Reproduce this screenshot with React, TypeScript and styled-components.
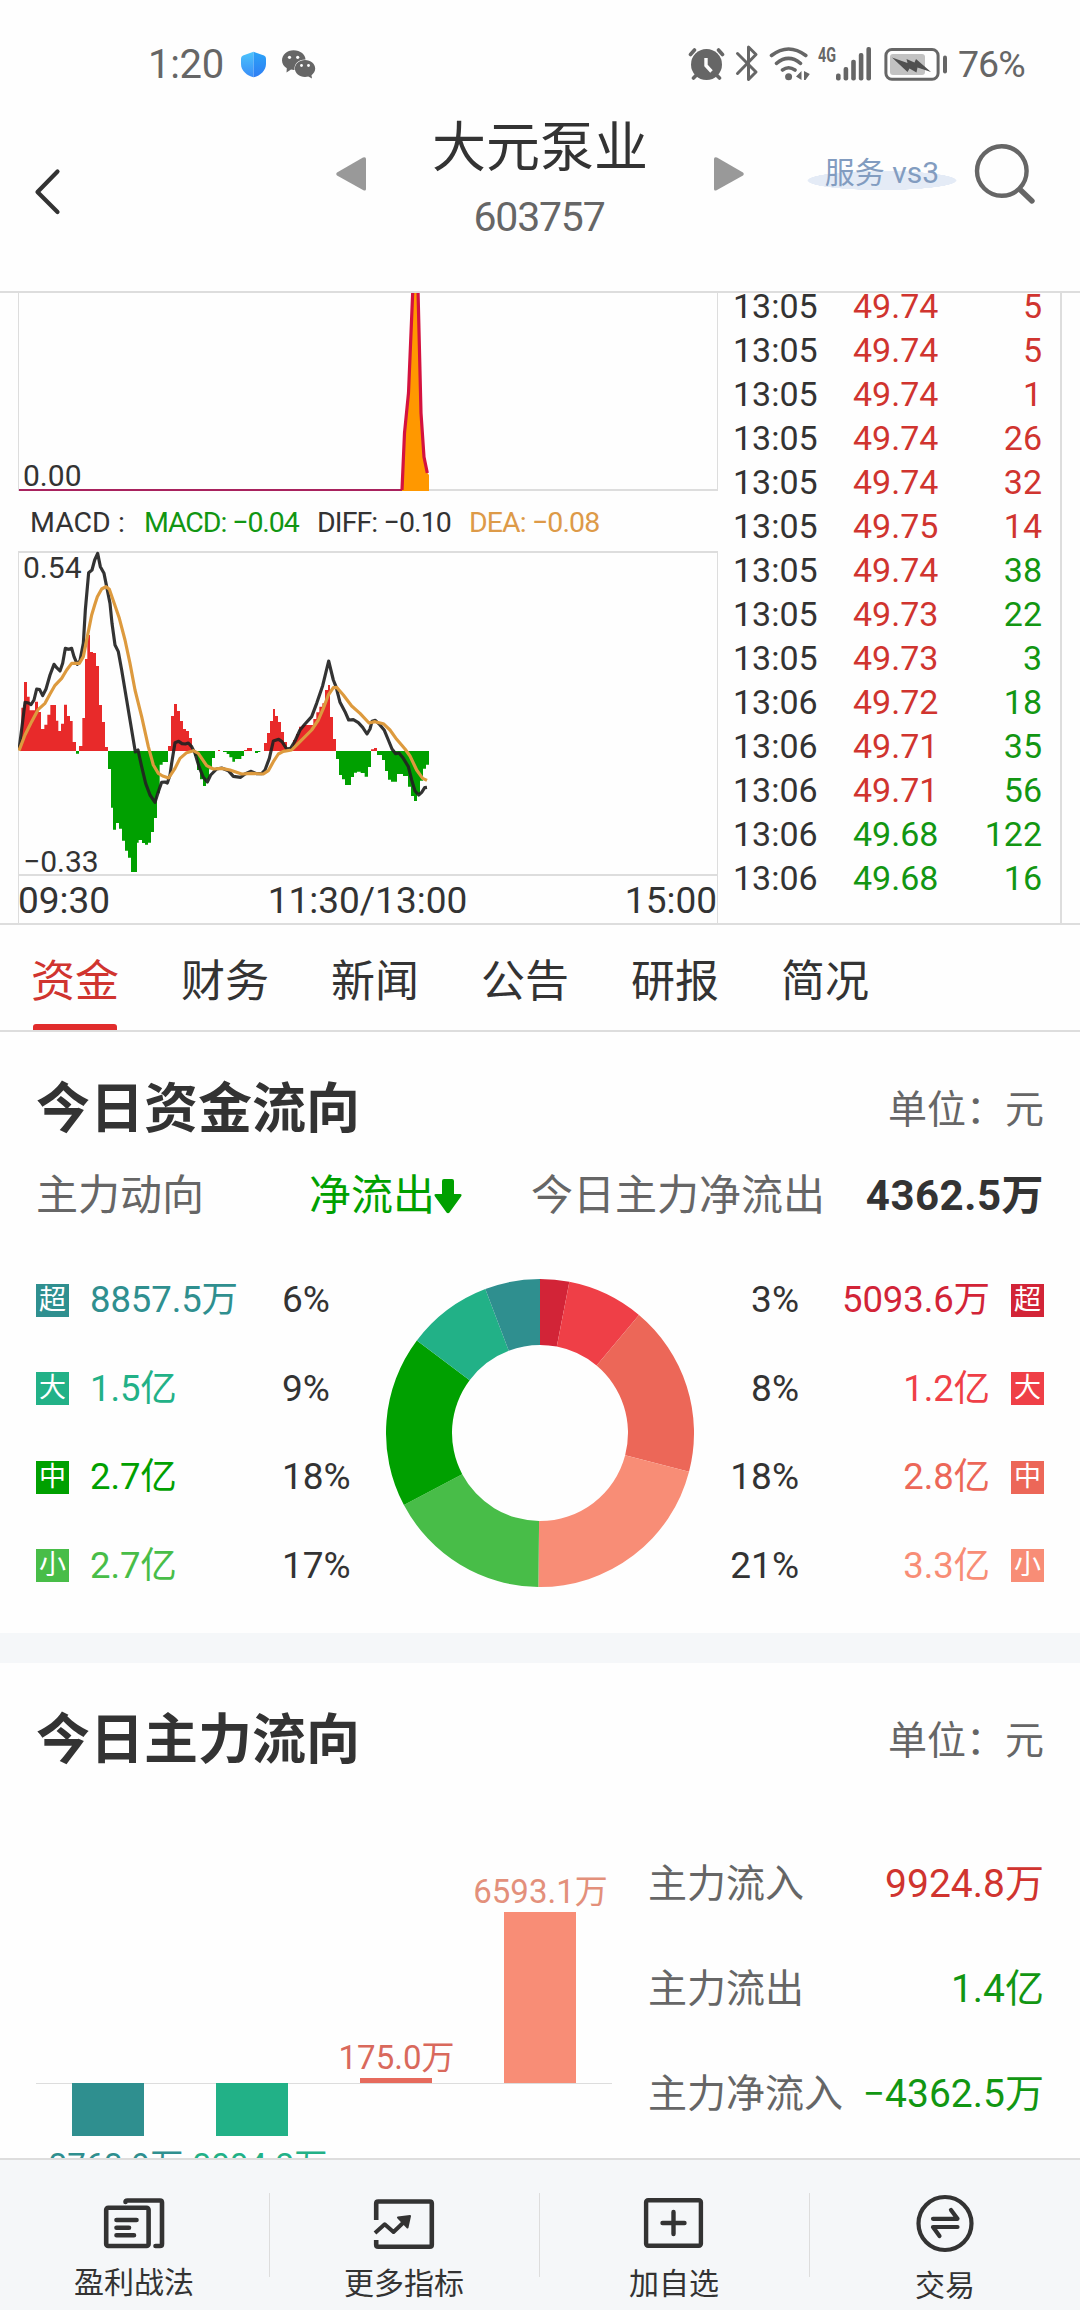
import React from 'react';
import styled, { createGlobalStyle } from 'styled-components';

const INK = '#333333';
const GREY = '#666666';
const RED = '#d0342f';
const GREEN = '#129612';
const LINE = '#dddddd';

const GlobalStyle = createGlobalStyle`
  * { box-sizing: border-box; }
  html, body { margin: 0; padding: 0; background: #fefefe; }
  body {
    font-family: Roboto, "Noto Sans CJK SC", sans-serif;
    color: ${INK};
  }
`;

const Screen = styled.div`
  width: 1080px;
  height: 2310px;
  display: flex;
  flex-direction: column;
  overflow: hidden;
  background: #fefefe;
  white-space: nowrap;
`;

/* ---------- status bar ---------- */
const StatusBar = styled.div`
  height: 110px;
  padding: 18px 54px 0 148px;
  display: flex;
  justify-content: space-between;
  align-items: flex-start;
  color: ${GREY};
`;
const StatusGroup = styled.div`
  display: flex;
  align-items: center;
  height: 92px;
`;
const Clock = styled.span`
  width: 90px;
  font-size: 40px;
  line-height: 93px;
  letter-spacing: -0.3px;
`;
const Battery = styled.span`
  width: 68px;
  font-size: 37.5px;
  line-height: 94px;
  letter-spacing: -1px;
`;

/* ---------- title bar ---------- */
const TitleBar = styled.header`
  height: 181px;
  display: flex;
  align-items: flex-start;
`;
const BackSlot = styled.div`
  width: 336px;
  padding: 58px 0 0 32px;
`;
const ArrowSlot = styled.div`
  width: 30px;
  padding-top: 47px;
`;
const TitleBlock = styled.div`
  width: 348px;
  display: flex;
  flex-direction: column;
  align-items: center;
`;
const StockName = styled.h1`
  margin: 4px 0 0;
  font-size: 54px;
  line-height: 70px;
  font-weight: 400;
`;
const StockCode = styled.div`
  margin: 8px 2px 0 0;
  font-size: 41px;
  line-height: 50px;
  letter-spacing: -1.2px;
  color: ${GREY};
`;
const Service = styled.div`
  margin: 41px 0 0 63px;
  width: 150px;
  height: 40px;
  text-align: center;
  font-size: 30px;
  line-height: 43px;
  color: #829cc0;
  background: radial-gradient(ellipse 75px 9.7px at 50% 29.5px, #e4ebf6 98%, transparent 100%);
`;
const SearchSlot = styled.div`
  margin: 32px 0 0 15px;
`;

/* ---------- chart panel ---------- */
const Market = styled.section`
  height: 634px;
  padding-left: 18px;
  display: flex;
  border-top: 2px solid ${LINE};
  border-bottom: 2px solid ${LINE};
  overflow: hidden;
`;
const Charts = styled.div`
  width: 700px;
  display: flex;
  flex-direction: column;
`;
const Plot = styled.div<{ $h: number }>`
  height: ${(p) => p.$h}px;
  display: grid;
  svg, p { grid-area: 1 / 1; }
  svg { display: block; }
`;
const PlotLabel = styled.p<{ $end?: boolean }>`
  margin: 0;
  padding-left: 5px;
  align-self: ${(p) => (p.$end ? 'end' : 'start')};
  font-size: 30px;
  line-height: ${(p) => (p.$end ? 30 : 34)}px;
`;
const Indicator = styled.div`
  height: 60px;
  padding-left: 12px;
  display: flex;
  font-size: 28.5px;
  line-height: 63px;
`;
const IndicatorItem = styled.span<{ $w: number; $c: string; $track?: number }>`
  width: ${(p) => p.$w}px;
  color: ${(p) => p.$c};
  letter-spacing: ${(p) => p.$track ?? -0.9}px;
`;
const Axis = styled.div`
  height: 47px;
  display: flex;
  justify-content: space-between;
  border: solid ${LINE};
  border-width: 0 1px;
  font-size: 37px;
  line-height: 48px;
  span:first-child { margin-left: -1px; }
`;

const Quotes = styled.div`
  width: 344px;
  margin-top: -9px;
  border-right: 2px solid ${LINE};
`;
const QuoteRow = styled.div`
  height: 43.97px;
  padding: 0 18px 0 15px;
  display: grid;
  grid-template-columns: 120px 90px 1fr;
  font-size: 34px;
  line-height: 44px;
`;
const Cell = styled.span<{ $c: string; $right?: boolean }>`
  color: ${(p) => p.$c};
  text-align: ${(p) => (p.$right ? 'right' : 'left')};
`;

/* ---------- tabs ---------- */
const Tabs = styled.nav`
  height: 107px;
  padding-left: 31px;
  display: flex;
  gap: 62px;
  border-bottom: 2px solid ${LINE};
`;
const Tab = styled.div<{ $on?: boolean }>`
  width: 88px;
  height: 105px;
  display: flex;
  flex-direction: column;
  justify-content: space-between;
  align-items: center;
  font-size: 44px;
  line-height: 114px;
  color: ${(p) => (p.$on ? RED : INK)};
  &::after {
    content: '';
    flex: none;
    width: 84px;
    height: 6px;
    margin-top: -15px;
    border-radius: 3px 3px 0 0;
    background: ${(p) => (p.$on ? '#e12c2c' : 'transparent')};
  }
`;

/* ---------- cards ---------- */
const Card = styled.section<{ $h: number }>`
  height: ${(p) => p.$h}px;
  padding: 44px 36px 0;
  overflow: hidden;
`;
const CardHead = styled.div`
  height: 64px;
  display: flex;
  justify-content: space-between;
  line-height: 68px;
`;
const CardTitle = styled.h2`
  margin: 0;
  font-size: 54px;
  font-weight: 700;
`;
const Unit = styled.span`
  font-size: 39px;
  color: ${GREY};
`;
const Trend = styled.div`
  margin-top: 24px;
  height: 60px;
  display: grid;
  grid-template-columns: 273px 222px auto 1fr;
  font-size: 42px;
  line-height: 63px;
  color: ${GREY};
`;
const Outflow = styled.span`
  display: flex;
  align-items: center;
  color: #00a000;
  svg { margin-left: -1px; }
`;
const TrendValue = styled.strong`
  text-align: right;
  color: ${INK};
  letter-spacing: 0.5px;
`;
const Breakdown = styled.div`
  margin-top: 32px;
  height: 354px;
  display: grid;
  grid-template-columns: 350px 308px 350px;
  align-items: center;
`;
const Legend = styled.div`
  display: flex;
  flex-direction: column;
`;
const LegendRow = styled.div<{ $flip?: boolean }>`
  height: 88.5px;
  display: flex;
  flex-direction: ${(p) => (p.$flip ? 'row-reverse' : 'row')};
  align-items: center;
  font-size: 37px;
  line-height: 44px;
`;
const Badge = styled.span<{ $c: string }>`
  width: 33px;
  height: 33px;
  text-align: center;
  font-size: 27px;
  line-height: 33px;
  color: #ffffff;
  background: ${(p) => p.$c};
`;
const Amount = styled.span<{ $c: string; $flip?: boolean }>`
  width: ${(p) => (p.$flip ? 191 : 193)}px;
  margin: ${(p) => (p.$flip ? '0 21px 0 0' : '0 0 0 21px')};
  font-size: 36.5px;
  letter-spacing: -0.1px;
  text-align: ${(p) => (p.$flip ? 'right' : 'left')};
  color: ${(p) => p.$c};
`;
const Percent = styled.span`
  margin-left: -1px;
  line-height: 46px;
`;
const Divider = styled.div`
  height: 30px;
  background: #f5f7f9;
`;

/* ---------- main force flow ---------- */
const FlowBody = styled.div`
  display: flex;
`;
const BarChart = styled.div`
  width: 576px;
  display: grid;
  grid-template-columns: repeat(4, 144px);
  grid-template-rows: 312px 110px;
`;
const BarCell = styled.div<{ $down?: boolean }>`
  display: flex;
  flex-direction: column;
  align-items: center;
  justify-content: ${(p) => (p.$down ? 'flex-start' : 'flex-end')};
  border-top: ${(p) => (p.$down ? `1px solid ${LINE}` : 'none')};
`;
const Bar = styled.div<{ $h: number; $c: string; $down?: boolean }>`
  flex: none;
  width: 72px;
  height: ${(p) => p.$h}px;
  margin-top: ${(p) => (p.$down ? -1 : 0)}px;
  background: ${(p) => p.$c};
`;
const BarLabel = styled.span<{ $c: string; $gap?: boolean }>`
  flex: none;
  margin-top: ${(p) => (p.$gap ? 9 : 0)}px;
  margin-left: ${(p) => (p.$gap ? -3 : 1)}px;
  font-size: 33px;
  line-height: 41px;
  color: ${(p) => p.$c};
`;
const Summary = styled.dl`
  margin: 60px 0 0 36px;
  width: 396px;
`;
const SummaryRow = styled.div`
  height: 105px;
  display: flex;
  justify-content: space-between;
  font-size: 39px;
  line-height: 107px;
`;
const Term = styled.dt`
  color: ${GREY};
`;
const Detail = styled.dd<{ $c: string }>`
  margin: 0;
  color: ${(p) => p.$c};
`;

/* ---------- bottom bar ---------- */
const BottomBar = styled.footer`
  height: 152px;
  display: grid;
  grid-template-columns: repeat(4, 1fr);
  border-top: 2px solid ${LINE};
  background: #f5f7f9;
`;
const Action = styled.div<{ $drop?: number }>`
  display: flex;
  flex-direction: column;
  align-items: center;
  padding: 32px 2px 0 0;
  font-size: 30px;
  line-height: 40px;
  span { margin-top: ${(p) => p.$drop ?? 8}px; }
  background: linear-gradient(${LINE}, ${LINE}) no-repeat right 33px / 1px 84px;
  &:last-child { background: none; padding-right: 0; }
`;

const quotes: [string, string, string, boolean, boolean][] = [
  ['13:05', '49.74', '5', true, true],
  ['13:05', '49.74', '5', true, true],
  ['13:05', '49.74', '1', true, true],
  ['13:05', '49.74', '26', true, true],
  ['13:05', '49.74', '32', true, true],
  ['13:05', '49.75', '14', true, true],
  ['13:05', '49.74', '38', true, false],
  ['13:05', '49.73', '22', true, false],
  ['13:05', '49.73', '3', true, false],
  ['13:06', '49.72', '18', true, false],
  ['13:06', '49.71', '35', true, false],
  ['13:06', '49.71', '56', true, false],
  ['13:06', '49.68', '122', false, false],
  ['13:06', '49.68', '16', false, false],
];

const outLegend = [
  ['超', '8857.5万', '6%', '#2f8f8f'],
  ['大', '1.5亿', '9%', '#22b187'],
  ['中', '2.7亿', '18%', '#00a000'],
  ['小', '2.7亿', '17%', '#48bd48'],
];
const inLegend = [
  ['超', '5093.6万', '3%', '#d22437'],
  ['大', '1.2亿', '8%', '#ef3f47'],
  ['中', '2.8亿', '18%', '#ec6758'],
  ['小', '3.3亿', '21%', '#f88d76'],
];

const slices: [number, number, string][] = [
  [0, 11, '#d22437'],
  [11, 40, '#ef3f47'],
  [40, 104.6, '#ec6758'],
  [104.6, 180.6, '#f88d76'],
  [180.6, 242.1, '#48bd48'],
  [242.1, 306.9, '#00a000'],
  [306.9, 339.2, '#22b187'],
  [339.2, 360, '#2f8f8f'],
];

function slicePath(from: number, to: number) {
  const at = (deg: number, r: number) => {
    const a = (deg * Math.PI) / 180;
    return `${(154 + r * Math.sin(a)).toFixed(2)} ${(154 - r * Math.cos(a)).toFixed(2)}`;
  };
  return `M${at(from, 154)}A154 154 0 0 1 ${at(to, 154)}L${at(to, 88)}A88 88 0 0 0 ${at(from, 88)}Z`;
}

const Donut = () => (
  <svg width="308" height="308" viewBox="0 0 308 308">
    {slices.map(([a, b, c]) => (
      <path key={a} d={slicePath(a, b)} fill={c} />
    ))}
  </svg>
);

const redArea =
  'M60 633V600H64V503H72V426H81V470H89V511H105V485H114V516H123V567H133V554H142V524H151V495H168V542H175V573H183V551H192V494H201V528H210V543H218V606H228V633Z' +
  'M237 633V618H247V534H255V357H262V285H270V336H279V339H288V378H297V495H306V546H315V621H324V633Z' +
  'M504 633V618H513V528H522V492H531V513H540V543H549V567H558V573H567V594H576V633Z' +
  'M654 633V630H660V633ZM732 633V630H741V624H756V633Z' +
  'M792 633V609H801V579H810V543H819V507H825V528H834V546H843V576H852V606H861V628H870V622H879V600H888V582H897V560H906V555H940V537H949V517H958V500H967V490H975V450H984V435H990V531H999V597H1008V633Z' +
  'M1113 633V628H1122V624H1131V633Z';
const greenArea =
  'M228 633V641H237V633Z' +
  'M324 633V687H333V803H339V869H348V849H357V866H366V902H375V932H384V953H393V996H411V908H416V900H426V909H435V914H444V908H453V876H462V834H471V760H479V674H488V666H504V633Z' +
  'M582 633V648H591V690H600V718H609V738H618V718H627V688H636V654H645V633Z' +
  'M669 633V636H680V642H688V652H697V665H705V657H724V648H732V633ZM765 633V639H774V636H781V633Z' +
  'M1008 633V657H1017V705H1026V718H1035V735H1053V711H1062V698H1071V695H1082V699H1094V710H1104V681H1113V633Z' +
  'M1131 633V645H1146V660H1155V693H1164V719H1173V725H1191V702H1209V708H1224V740H1233V768H1242V783H1251V762H1260V722H1269V686H1278V674H1287V633Z';
const diffLine =
  '57,630 66,560 75,487 86,489 93,494 102,480 110,447 119,449 128,467 138,447 150,405 162,373 170,383 180,393 188,370 196,325 206,328 215,325 222,350 232,373 240,362 250,310 256,210 266,98 276,90 284,60 293,40 301,80 312,100 320,140 330,190 336,250 345,315 355,335 365,390 380,480 390,540 406,636 414,630 425,680 437,730 450,765 465,787 475,755 485,727 495,726 502,729 510,705 515,670 525,608 536,604 546,611 556,612 565,609 575,620 585,640 597,680 610,712 622,726 632,705 650,687 665,684 685,692 700,709 722,712 735,702 752,694 770,701 785,701 795,690 808,655 820,603 836,598 846,605 860,627 872,625 885,603 900,570 915,552 935,530 950,490 968,437 986,363 1000,420 1008,440 1020,487 1035,515 1046,540 1060,539 1075,548 1088,562 1101,582 1110,567 1116,544 1126,541 1140,555 1153,571 1165,600 1176,627 1187,641 1197,639 1210,655 1225,680 1235,720 1245,753 1256,765 1265,757 1274,743 1281,742';
const deaLine =
  '57,632 75,585 95,545 115,508 135,490 150,462 165,436 185,415 200,390 215,370 238,370 250,350 262,290 275,225 284,195 292,170 305,147 318,140 328,148 340,182 358,235 375,300 390,370 405,450 425,530 445,620 460,675 475,700 488,708 506,714 525,685 540,655 560,638 580,632 595,640 620,677 640,687 665,685 690,690 725,702 755,700 790,702 805,692 820,665 835,642 850,634 875,630 895,610 935,570 955,540 970,505 985,465 1000,443 1010,442 1030,465 1055,498 1080,520 1107,549 1125,545 1150,551 1170,570 1190,598 1215,627 1230,648 1250,690 1268,715 1281,721';

const FlowSpike = () => (
  <svg width="700" height="198" viewBox="18 293 700 198">
    <path d="M18.5 293V490M717.5 293V490" stroke={LINE} fill="none" />
    <path d="M18 490H718" stroke={LINE} strokeWidth="2" />
    <path d="M402 491L404.5 433L408.5 393L413 293H418.500L421.500 413L424.500 457L427.500 473L429 475V491Z" fill="#ff9800" />
    <path d="M19 490H402" stroke="#a8225e" strokeWidth="2" />
    <path d="M402 490L404.500 433L408.500 393L412.800 290M418 290L421 413L424 457L427.300 473" stroke="#d4123f" strokeWidth="3.200" fill="none" />
  </svg>
);

const MacdChart = () => (
  <svg width="700" height="326" viewBox="54 33 2100 978">
    <path d="M54 36H2154M54 1005H2154" stroke={LINE} strokeWidth="6" />
    <path d="M55.500 36V1011M2152.500 36V1011" stroke={LINE} strokeWidth="3" />
    <path d={redArea} fill="#e82a2a" />
    <path d={greenArea} fill="#00a000" />
    <polyline points={diffLine} fill="none" stroke="#222222" strokeOpacity=".92" strokeWidth="9.500" strokeLinejoin="round" />
    <polyline points={deaLine} fill="none" stroke="#dd9a3e" strokeWidth="9.500" strokeLinejoin="round" />
  </svg>
);

const NoticeIcons = () => (
  <svg width="80" height="40" viewBox="238 42 80 40">
    <defs>
      <linearGradient id="shieldLeft" x1="0" y1="0" x2="0" y2="1">
        <stop offset="0" stopColor="#4cc4fb" />
        <stop offset="1" stopColor="#3a8df8" />
      </linearGradient>
      <linearGradient id="shieldRight" x1="0" y1="0" x2="0" y2="1">
        <stop offset="0" stopColor="#2ba4f8" />
        <stop offset="1" stopColor="#2f7df3" />
      </linearGradient>
    </defs>
    <path d="M253.500 49.700L243 53.600Q241 54.400 241 56.500V62C241 68.500 247 74 253.500 75.300Z" fill="url(#shieldLeft)" />
    <path d="M253.500 49.700L264 53.600Q266 54.400 266 56.500V62C266 68.500 260 74 253.500 75.300Z" fill="url(#shieldRight)" />
    <path d="M293.500 48.200C300.500 48.200 305.500 52.600 305.500 57.500C298 57.600 294 62 294.500 67.900Q293 68 291 67.600L286.500 70.500L286.800 66.300C284 64.500 282 61.700 282 58.500C282 52.700 287 48.200 293.500 48.200Z" fill={GREY} />
    <path d="M305 58C310.800 58 315.200 61.800 315.200 66.600C315.200 69.400 313.700 71.600 311.500 73.200L312 76.600L308.300 74.600Q306.800 75 305 75C299.300 75 294.900 71.300 294.900 66.600C294.900 61.800 299.300 58 305 58Z" fill={GREY} />
    <g fill="#fefefe">
      <circle cx="289.500" cy="55.300" r="1.600" />
      <circle cx="297.700" cy="55.300" r="1.600" />
      <circle cx="301.500" cy="63.500" r="1.400" />
      <circle cx="308.500" cy="63.500" r="1.400" />
    </g>
  </svg>
);

const SystemIcons = () => (
  <svg width="270" height="46" viewBox="688 39 270 46">
    <g fill="none" stroke={GREY} strokeLinecap="round">
      <circle cx="706.500" cy="62.500" r="15.500" fill={GREY} stroke="none" />
      <path d="M706 56V63.500L711.500 69.500" stroke="#fefefe" strokeWidth="3.400" strokeLinecap="butt" />
      <path d="M690.500 52.500L694.500 48M722.500 52.500L718.500 48M693.500 76L697 72.500M719.500 76L716 72.500" strokeWidth="3.600" />
      <path d="M737.500 51.500L756 70L748.500 77.500V45L756 52.500L737.500 71.500" strokeWidth="3" strokeLinejoin="round" />
      <path d="M771.500 53.500Q788.500 40.500 805.800 53.500M776.500 61.300Q788.500 51.500 800.500 61.300M782.500 68Q788.500 63.500 795 68" strokeWidth="3.600" />
      <circle cx="788.600" cy="74.700" r="3.500" fill={GREY} stroke="none" />
      <path d="M801.500 69V78L796 74.500ZM804 69L809.800 72L805.500 78H804Z" fill={GREY} stroke="none" />
    </g>
    <text x="818" y="60" fontSize="20" fontWeight="700" fill={GREY} textLength="18" lengthAdjust="spacingAndGlyphs">4G</text>
    <g fill={GREY}>
      <rect x="836" y="71.500" width="4.600" height="7" rx="2" />
      <rect x="843.600" y="65" width="4.600" height="13.500" rx="2" />
      <rect x="851.200" y="57.700" width="4.600" height="20.800" rx="2" />
      <rect x="858.800" y="51" width="4.600" height="27.500" rx="2" />
      <rect x="866.400" y="45" width="4.600" height="33.500" rx="2" />
      <rect x="943" y="53.500" width="4" height="18" rx="2" />
    </g>
    <rect x="885.900" y="47.500" width="52.200" height="29.800" rx="6" fill="none" stroke={GREY} strokeWidth="3" />
    <rect x="890" y="52" width="35" height="21" rx="3" fill="#c2c2c2" />
    <path d="M892 55.500L907.500 61L906.500 57L914.500 60.500L916 57L931 70L917.500 65.500L916.500 70.500L909.500 66.500L907.500 70Z" fill="#505050" />
  </svg>
);

const App = () => (
  <>
    <GlobalStyle />
    <Screen>
      <StatusBar>
        <StatusGroup>
          <Clock>1:20</Clock>
          <NoticeIcons />
        </StatusGroup>
        <StatusGroup>
          <SystemIcons />
          <Battery>76%</Battery>
        </StatusGroup>
      </StatusBar>

      <TitleBar>
        <BackSlot>
          <svg width="30" height="48" viewBox="33 168 30 48">
            <path d="M58.500 171.500L38.500 192L58.500 212" fill="none" stroke={INK} strokeWidth="4.200" strokeLinecap="round" strokeLinejoin="round" />
          </svg>
        </BackSlot>
        <ArrowSlot>
          <svg width="30" height="34" viewBox="0 0 30 34">
            <path d="M1 15.500L27 .500Q30 -.500 30 2V32Q30 34.500 27 33L1 18.500Q-.500 17 1 15.500Z" fill="#999999" />
          </svg>
        </ArrowSlot>
        <TitleBlock>
          <StockName>大元泵业</StockName>
          <StockCode>603757</StockCode>
        </TitleBlock>
        <ArrowSlot>
          <svg width="30" height="34" viewBox="0 0 30 34">
            <path d="M29 15.500L3 .500Q0 -.500 0 2V32Q0 34.500 3 33L29 18.500Q30.500 17 29 15.500Z" fill="#999999" />
          </svg>
        </ArrowSlot>
        <Service>服务 vs3</Service>
        <SearchSlot>
          <svg width="66" height="64" viewBox="972 142 66 64">
            <circle cx="1001.800" cy="171" r="24.800" fill="none" stroke={GREY} strokeWidth="4.400" />
            <path d="M1020 189.500L1032 201" stroke={GREY} strokeWidth="5.400" strokeLinecap="round" />
          </svg>
        </SearchSlot>
      </TitleBar>

      <Market>
        <Charts>
          <Plot $h={198}>
            <FlowSpike />
            <PlotLabel $end>0.00</PlotLabel>
          </Plot>
          <Indicator>
            <IndicatorItem $w={114} $c={INK} $track={0}>MACD :</IndicatorItem>
            <IndicatorItem $w={173} $c={GREEN} $track={-1.1}>MACD: −0.04</IndicatorItem>
            <IndicatorItem $w={152} $c={INK}>DIFF: −0.10</IndicatorItem>
            <IndicatorItem $w={140} $c="#dd9a48">DEA: −0.08</IndicatorItem>
          </Indicator>
          <Plot $h={326}>
            <MacdChart />
            <PlotLabel>0.54</PlotLabel>
            <PlotLabel $end>−0.33</PlotLabel>
          </Plot>
          <Axis>
            <span>09:30</span>
            <span>11:30/13:00</span>
            <span>15:00</span>
          </Axis>
        </Charts>
        <Quotes>
          {quotes.map(([t, p, q, up, buy], i) => (
            <QuoteRow key={i}>
              <Cell $c={INK}>{t}</Cell>
              <Cell $c={up ? RED : GREEN}>{p}</Cell>
              <Cell $c={buy ? RED : GREEN} $right>{q}</Cell>
            </QuoteRow>
          ))}
        </Quotes>
      </Market>

      <Tabs>
        {['资金', '财务', '新闻', '公告', '研报', '简况'].map((t, i) => (
          <Tab key={t} $on={i === 0}>{t}</Tab>
        ))}
      </Tabs>

      <Card $h={601}>
        <CardHead>
          <CardTitle>今日资金流向</CardTitle>
          <Unit>单位：元</Unit>
        </CardHead>
        <Trend>
          <span>主力动向</span>
          <Outflow>
            净流出
            <svg width="28" height="36" viewBox="0 0 28 36">
              <path d="M8 3Q8 1 10 1H18Q20 1 20 3V16H26Q28.500 16 27 18.500L15.500 34.500Q14 36 12.500 34.500L1 18.500Q-.500 16 2 16H8Z" fill="#00a000" />
            </svg>
          </Outflow>
          <span>今日主力净流出</span>
          <TrendValue>4362.5万</TrendValue>
        </Trend>
        <Breakdown>
          <Legend>
            {outLegend.map(([n, v, p, c]) => (
              <LegendRow key={n}>
                <Badge $c={c}>{n}</Badge>
                <Amount $c={c}>{v}</Amount>
                <Percent>{p}</Percent>
              </LegendRow>
            ))}
          </Legend>
          <Donut />
          <Legend>
            {inLegend.map(([n, v, p, c]) => (
              <LegendRow key={n} $flip>
                <Badge $c={c}>{n}</Badge>
                <Amount $c={c} $flip>{v}</Amount>
                <Percent>{p}</Percent>
              </LegendRow>
            ))}
          </Legend>
        </Breakdown>
      </Card>
      <Divider />

      <Card $h={495}>
        <CardHead>
          <CardTitle>今日主力流向</CardTitle>
          <Unit>单位：元</Unit>
        </CardHead>
        <FlowBody>
          <BarChart>
            <BarCell />
            <BarCell />
            <BarCell>
              <BarLabel $c="#d9695c">175.0万</BarLabel>
              <Bar $h={5} $c="#e66a5c" />
            </BarCell>
            <BarCell>
              <BarLabel $c="#e3907b">6593.1万</BarLabel>
              <Bar $h={171} $c="#f88d76" />
            </BarCell>
            <BarCell $down>
              <Bar $h={53} $c="#2f8f8f" $down />
              <BarLabel $c="#2f8f8f" $gap>−3763.9万</BarLabel>
            </BarCell>
            <BarCell $down>
              <Bar $h={53} $c="#22b187" $down />
              <BarLabel $c="#22b187" $gap>−3004.2万</BarLabel>
            </BarCell>
            <BarCell $down />
            <BarCell $down />
          </BarChart>
          <Summary>
            <SummaryRow>
              <Term>主力流入</Term>
              <Detail $c={RED}>9924.8万</Detail>
            </SummaryRow>
            <SummaryRow>
              <Term>主力流出</Term>
              <Detail $c={GREEN}>1.4亿</Detail>
            </SummaryRow>
            <SummaryRow>
              <Term>主力净流入</Term>
              <Detail $c={GREEN}>−4362.5万</Detail>
            </SummaryRow>
          </Summary>
        </FlowBody>
      </Card>

      <BottomBar>
        <Action $drop={7}>
          <svg width="64" height="64" viewBox="102 2192 64 64" fill="none" stroke={INK} strokeWidth="4.600" strokeLinecap="round" strokeLinejoin="round">
            <rect x="106.200" y="2207.800" width="42.400" height="38.200" rx="2" />
            <path d="M125.500 2202V2202Q125.500 2200.500 127.500 2200.500H160Q162 2200.500 162 2202.500V2244Q162 2246 160 2246H155.500M116.500 2220H136.500M116.500 2227.700H129M116.500 2235.300H134" />
          </svg>
          <span>盈利战法</span>
        </Action>
        <Action>
          <svg width="64" height="64" viewBox="372 2192 64 64" fill="none" stroke={INK} strokeWidth="4.600" strokeLinejoin="round">
            <path d="M376.200 2220V2203.500Q376.200 2201.500 378.200 2201.500H429.800Q431.800 2201.500 431.800 2203.500V2244.800Q431.800 2246.800 429.800 2246.800H378.200Q376.200 2246.800 376.200 2244.800V2240" />
            <path d="M375 2233L384.700 2224.300L393.500 2232L405 2221" strokeWidth="4" />
            <path d="M398 2217.500L410 2216L407.500 2227.500Z" fill={INK} strokeWidth="2" />
          </svg>
          <span>更多指标</span>
        </Action>
        <Action>
          <svg width="64" height="64" viewBox="642 2192 64 64" fill="none" stroke={INK} strokeWidth="4.400" strokeLinecap="round" strokeLinejoin="round">
            <rect x="646.100" y="2200.300" width="54.800" height="45.400" rx="2" />
            <path d="M673.500 2212V2234M662.500 2223H684.500" />
          </svg>
          <span>加自选</span>
        </Action>
        <Action $drop={10}>
          <svg width="64" height="64" viewBox="913 2192 64 64" fill="none" stroke={INK} strokeWidth="4.200" strokeLinecap="round" strokeLinejoin="round">
            <circle cx="945" cy="2223.500" r="26.500" />
            <path d="M933 2218.800H957.500L951 2210M957.500 2227H933L939.500 2236" />
          </svg>
          <span>交易</span>
        </Action>
      </BottomBar>
    </Screen>
  </>
);

export default App;
